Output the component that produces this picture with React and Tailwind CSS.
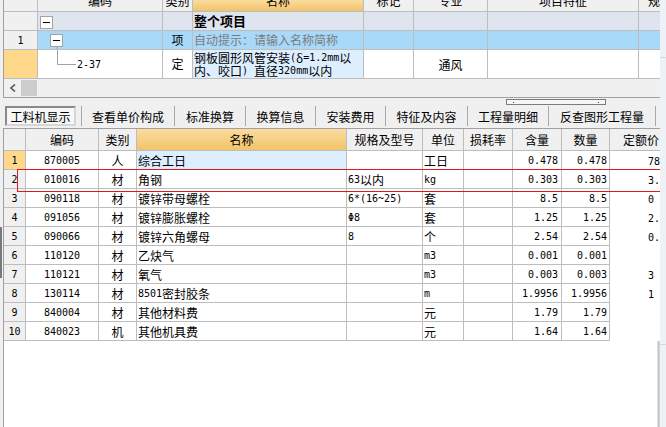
import React from 'react';

const CJK = "font-['Noto_Sans_CJK_SC',sans-serif] text-[12px]";
const MONO = "font-['DejaVu_Sans_Mono',monospace] text-[10px]";

function T({ s }) {
  const parts = [];
  let cur = '';
  let curC = null;
  for (const ch of s) {
    const c = ch.codePointAt(0) >= 0x2e80 || ch === 'δ';
    if (curC === null || c === curC) {
      cur += ch;
      curC = c;
    } else {
      parts.push([cur, curC]);
      cur = ch;
      curC = c;
    }
  }
  if (cur) parts.push([cur, curC]);
  return (
    <>
      {parts.map(([t, c], i) => (
        <span key={i} className={c ? CJK : MONO + ' whitespace-pre'}>
          {t}
        </span>
      ))}
    </>
  );
}

const TW = ['w-[34px]', 'w-[125px]', 'w-[30px]', 'w-[171px]', 'w-[50px]', 'w-[74px]', 'w-[151px]', 'w-[21px]'];
const BW = ['w-[22px]', 'w-[73px]', 'w-[38px]', 'w-[210px]', 'w-[76px]', 'w-[41px]', 'w-[49px]', 'w-[49px]', 'w-[48px]', 'w-[50px]'];

const cellBase = 'shrink-0 flex items-center overflow-hidden whitespace-nowrap border-b border-[#bdbdbd]';

function TopHeader() {
  const labels = ['', '编码', '类别', '名称', '标记', '专业', '项目特征', '规格型号'];
  return (
    <div className="flex h-[12px]">
      {labels.map((l, i) => (
        <div
          key={i}
          className={`${cellBase} ${TW[i]} ${i < 7 ? 'border-r' : ''} items-end pb-[4px] leading-[12px] ${
            i === 3 ? 'bg-gradient-to-b from-[#fbdc9e] to-[#f2c468]' : 'bg-[#f0f0f0]'
          } ${i === 7 ? 'justify-start pl-[9px]' : 'justify-center'}`}
        >
          <span className={`${CJK} leading-[12px]`}>{l}</span>
        </div>
      ))}
    </div>
  );
}

function BoxSvg({ w, h, bx, by, tail }) {
  return (
    <svg width={w} height={h} className="block shrink-0">
      {tail && <line x1={bx + 7} y1={by + 12} x2={bx + 7} y2={h} stroke="#a0a0a0" />}
      <rect x={bx + 0.5} y={by + 0.5} width="12" height="12" fill="#ffffff" stroke="#a4a4a4" />
      <line x1={bx + 3} y1={by + 6.5} x2={bx + 10} y2={by + 6.5} stroke="#000000" />
    </svg>
  );
}

function TopGrid() {
  return (
    <div className="flex flex-col">
      <TopHeader />
      {/* 整个项目 */}
      <div className="flex h-[19px]">
        <div className={`${cellBase} ${TW[0]} border-r bg-[#f0f0f0]`} />
        <div className={`${cellBase} ${TW[1]} border-r bg-[#dfe5ee]`}>
          <BoxSvg w={20} h={18} bx={2} by={4} />
        </div>
        <div className={`${cellBase} ${TW[2]} border-r bg-[#dfe5ee]`} />
        <div className={`${cellBase} ${TW[3]} border-r bg-[#dfe5ee] pl-[1px]`}>
          <span className="font-['Noto_Sans_CJK_SC',sans-serif] text-[13px] font-bold leading-[14px] text-black">整个项目</span>
        </div>
        <div className={`${cellBase} ${TW[4]} border-r bg-[#dfe5ee]`} />
        <div className={`${cellBase} ${TW[5]} border-r bg-[#dfe5ee]`} />
        <div className={`${cellBase} ${TW[6]} border-r bg-[#dfe5ee]`} />
        <div className={`${cellBase} ${TW[7]} bg-[#dfe5ee]`} />
      </div>
      {/* row 1 */}
      <div className="flex h-[19px]">
        <div className={`${cellBase} ${TW[0]} border-r bg-[#f0f0f0] justify-center`}>
          <span className={MONO}>1</span>
        </div>
        <div className={`${cellBase} ${TW[1]} border-r bg-[#a8d9f8]`}>
          <BoxSvg w={30} h={18} bx={12} by={3} tail />
        </div>
        <div className={`${cellBase} ${TW[2]} border-r bg-[#a8d9f8] justify-center`}>
          <span className={CJK}>项</span>
        </div>
        <div className={`${cellBase} ${TW[3]} border-r bg-[#a8d9f8] pl-[1px]`}>
          <span className={`${CJK} text-[#7c7c7c]`}>自动提示：请输入名称简称</span>
        </div>
        <div className={`${cellBase} ${TW[4]} border-r bg-[#a8d9f8]`} />
        <div className={`${cellBase} ${TW[5]} border-r bg-[#a8d9f8]`} />
        <div className={`${cellBase} ${TW[6]} border-r bg-[#a8d9f8]`} />
        <div className={`${cellBase} ${TW[7]} bg-[#a8d9f8]`} />
      </div>
      {/* row 2-37 */}
      <div className="flex h-[29px]">
        <div className={`${cellBase} ${TW[0]} border-r bg-[#ffd88c]`} />
        <div className={`${cellBase} ${TW[1]} border-r bg-white`}>
          <svg width="39" height="28" className="block shrink-0">
            <line x1="19.5" y1="0" x2="19.5" y2="14.5" stroke="#a0a0a0" />
            <line x1="19.5" y1="14.5" x2="38" y2="14.5" stroke="#a0a0a0" />
          </svg>
          <span className={MONO}>2-37</span>
        </div>
        <div className={`${cellBase} ${TW[2]} border-r bg-white justify-center`}>
          <span className={CJK}>定</span>
        </div>
        <div className={`${cellBase} ${TW[3]} border-r bg-[#ddeeff] pl-[1px] flex-col items-start justify-center`}>
          <div className="h-[13px] flex items-center leading-[13px]"><T s="钢板圆形风管安装(δ=1.2mm以" /></div>
          <div className="h-[13px] flex items-center leading-[13px]"><T s="内、咬口) 直径320mm以内" /></div>
        </div>
        <div className={`${cellBase} ${TW[4]} border-r bg-white`} />
        <div className={`${cellBase} ${TW[5]} border-r bg-white justify-center pt-[1px]`}>
          <span className={CJK}>通风</span>
        </div>
        <div className={`${cellBase} ${TW[6]} border-r bg-white`} />
        <div className={`${cellBase} ${TW[7]} bg-white`} />
      </div>
      {/* horizontal scrollbar */}
      <div className="h-[19px] flex items-center border-b border-[#a0a0a0] bg-[#f0f0f0]">
        <div className="w-[17px] h-[18px] flex items-center justify-center">
          <svg width="8" height="8" className="block">
            <path d="M6 0.5 L2 4 L6 7.5" fill="none" stroke="#555555" strokeWidth="1.6" />
          </svg>
        </div>
        <div className="w-[16px] h-[16px] bg-[#cdcdcd]" />
      </div>
    </div>
  );
}

const rows = [
  ['1', '870005', '人', '综合工日', '', '工日', '', '0.478', '0.478', '78'],
  ['2', '010016', '材', '角钢', '63以内', 'kg', '', '0.303', '0.303', '3.'],
  ['3', '090118', '材', '镀锌带母螺栓', '6*(16~25)', '套', '', '8.5', '8.5', '0'],
  ['4', '091056', '材', '镀锌膨胀螺栓', 'Φ8', '套', '', '1.25', '1.25', '2.'],
  ['5', '090066', '材', '镀锌六角螺母', '8', '个', '', '2.54', '2.54', '0.'],
  ['6', '110120', '材', '乙炔气', '', 'm3', '', '0.001', '0.001', ''],
  ['7', '110121', '材', '氧气', '', 'm3', '', '0.003', '0.003', '3'],
  ['8', '130114', '材', '8501密封胶条', '', 'm', '', '1.9956', '1.9956', '1'],
  ['9', '840004', '材', '其他材料费', '', '元', '', '1.79', '1.79', ''],
  ['10', '840023', '机', '其他机具费', '', '元', '', '1.64', '1.64', ''],
];

const ALIGN = [
  'justify-center',
  'justify-center',
  'justify-center',
  'justify-start pl-[1px]',
  'justify-start pl-[1px]',
  'justify-start pl-[1px]',
  'justify-end pr-[3px]',
  'justify-end pr-[3px]',
  'justify-end pr-[2px]',
  'justify-start pl-[38px]',
];

function BottomGrid() {
  const heads = ['', '编码', '类别', '名称', '规格及型号', '单位', '损耗率', '含量', '数量', '定额价'];
  return (
    <div className="relative flex flex-col flex-1 border-l border-t border-[#a0a0a0] bg-white overflow-hidden">
      <div className="flex h-[22px]">
        {heads.map((h, i) => (
          <div
            key={i}
            className={`${cellBase} ${BW[i]} ${i < 9 ? 'border-r' : ''} ${
              i === 3 ? 'bg-gradient-to-b from-[#fbdc9e] to-[#f2c468]' : 'bg-[#f0f0f0]'
            } ${i === 9 ? 'justify-start pl-[13px]' : 'justify-center'} pt-[1px]`}
          >
            <span className={CJK}>{h}</span>
          </div>
        ))}
      </div>
      {rows.map((r, ri) => (
        <div key={ri} className="flex h-[19px]">
          {r.map((v, ci) => {
            let bg = 'bg-white';
            if (ci === 0) bg = ri === 0 ? 'bg-[#ffd88c]' : 'bg-[#f0f0f0]';
            if (ci === 3 && ri === 0) bg = 'bg-[#ddeeff]';
            return (
              <div
                key={ci}
                className={`${cellBase} ${BW[ci]} ${ci < 9 ? 'border-r' : 'border-b-0'} ${bg} ${ALIGN[ci]} pt-[1px]`}
              >
                <T s={v} />
              </div>
            );
          })}
        </div>
      ))}
      <div className="flex-1 flex">
        <div className="flex-1" />
        <div className="w-[3px] bg-gradient-to-r from-[#f2f2f2] via-[#c4c4c4] to-[#dcdcdc]" />
      </div>
      {/* focus rectangle */}
      <div className="absolute left-[13px] top-[40px] h-[23px] right-[-20px] border border-[#e01818]" />
    </div>
  );
}

function Tabs() {
  const tabs = [
    ['查看单价构成', 'w-[92px]'],
    ['标准换算', 'w-[70px]'],
    ['换算信息', 'w-[69px]'],
    ['安装费用', 'w-[69px]'],
    ['特征及内容', 'w-[81px]'],
    ['工程量明细', 'w-[80px]'],
    ['反查图形工程量', 'w-[106px]'],
  ];
  return (
    <div className="h-[22px] flex items-center pl-[5px]">
      <div className="w-[71px] h-[20px] flex items-center justify-center border-2 border-t-[#8a8a8a] border-l-[#8a8a8a] border-b-[#d6d6d6] border-r-[#d6d6d6] bg-[#f7f7f7] pt-[1px]">
        <span className={`${CJK} text-black`}>工料机显示</span>
      </div>
      <div className="w-[5px]" />
      {tabs.map(([t, w], i) => (
        <React.Fragment key={i}>
          <div className="w-[1px] h-[20px] bg-[#a8a8a8]" />
          <div className={`${w} h-[22px] flex items-center justify-center pt-[2px]`}>
            <span className={`${CJK} text-black`}>{t}</span>
          </div>
        </React.Fragment>
      ))}
      <div className="w-[1px] h-[20px] bg-[#a8a8a8]" />
    </div>
  );
}

export default function App() {
  return (
    <div className="w-[666px] h-[427px] flex bg-[#f0f0f0] overflow-hidden text-black">
      <div className="w-[660px] h-[427px] flex flex-col">
        {/* top panel */}
        <div className="flex">
          <div className="w-[3px] shrink-0" />
          <div className="w-[657px] border-l border-[#a0a0a0] overflow-hidden">
            <TopGrid />
          </div>
        </div>
        {/* splitter */}
        <div className="h-[1px]" />
        <div className="h-[6px] flex">
          <div className="ml-[506px] w-[100px] h-[6px] border border-[#7c7c7c] bg-[#f6f6f6] flex items-center justify-between px-[6px]">
            <div className="w-[1px] h-[1px] bg-[#2030c0]" />
            <div className="w-[1px] h-[1px] bg-[#2030c0]" />
          </div>
        </div>
        <Tabs />
        <div className="h-[1px]" />
        {/* bottom panel */}
        <div className="flex flex-1">
          <div className="w-[3px] shrink-0 flex flex-col">
            <div className="h-[99px]" />
            <div className="w-[2px] h-[51px] bg-[#7a7a7a]" />
          </div>
          <BottomGrid />
        </div>
      </div>
      <div className="w-[6px] h-[427px] flex flex-col bg-[#edf2f6]">
        <div className="h-[58px] border-b border-[#d3dbe3]" />
        <div className="h-[287px] border-b border-[#d3dbe3]" />
        <div className="flex-1" />
      </div>
    </div>
  );
}
